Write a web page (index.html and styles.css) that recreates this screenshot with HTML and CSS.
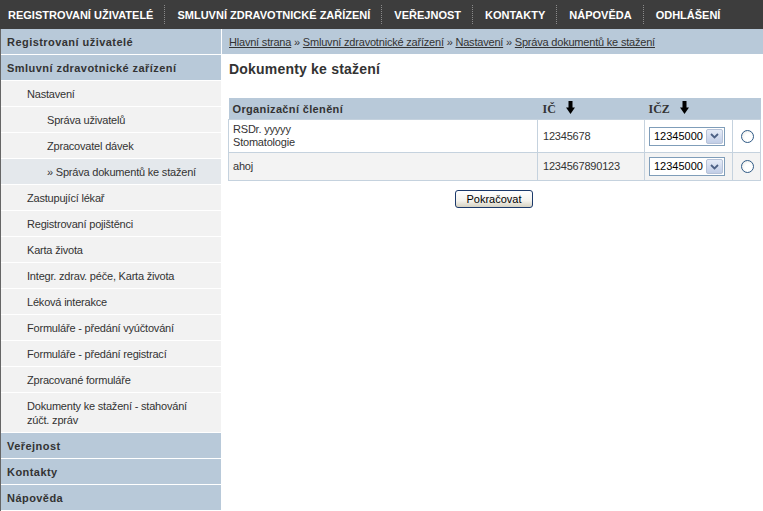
FILE: index.html
```html
<!DOCTYPE html>
<html lang="cs">
<head>
<meta charset="utf-8">
<title>Dokumenty ke stažení</title>
<link rel="stylesheet" href="styles.css">
</head>
<body>
<div class="page">
  <nav class="topnav">
    <a class="tn-item">REGISTROVANÍ UŽIVATELÉ</a><span class="tn-sep"></span>
    <a class="tn-item">SMLUVNÍ ZDRAVOTNICKÉ ZAŘÍZENÍ</a><span class="tn-sep"></span>
    <a class="tn-item">VEŘEJNOST</a><span class="tn-sep"></span>
    <a class="tn-item">KONTAKTY</a><span class="tn-sep"></span>
    <a class="tn-item">NÁPOVĚDA</a><span class="tn-sep"></span>
    <a class="tn-item">ODHLÁŠENÍ</a>
  </nav>
  <div class="main">
    <aside class="sidebar">
      <div class="sb-head">Registrovaní uživatelé</div>
      <div class="sb-head">Smluvní zdravotnické zařízení</div>
      <div class="sb-item">Nastavení</div>
      <div class="sb-sub">Správa uživatelů</div>
      <div class="sb-sub">Zpracovatel dávek</div>
      <div class="sb-sub active">» Správa dokumentů ke stažení</div>
      <div class="sb-item">Zastupující lékař</div>
      <div class="sb-item">Registrovaní pojištěnci</div>
      <div class="sb-item">Karta života</div>
      <div class="sb-item">Integr. zdrav. péče, Karta života</div>
      <div class="sb-item">Léková interakce</div>
      <div class="sb-item">Formuláře - předání vyúčtování</div>
      <div class="sb-item">Formuláře - předání registrací</div>
      <div class="sb-item">Zpracované formuláře</div>
      <div class="sb-item">Dokumenty ke stažení - stahování<br>zúčt. zpráv</div>
      <div class="sb-head">Veřejnost</div>
      <div class="sb-head">Kontakty</div>
      <div class="sb-head last">Nápověda</div>
    </aside>
    <section class="content">
      <div class="breadcrumb">
        <a>Hlavní strana</a> » <a>Smluvní zdravotnické zařízení</a> » <a>Nastavení</a> » <a>Správa dokumentů ke stažení</a>
      </div>
      <h1 class="title">Dokumenty ke stažení</h1>
      <table class="grid">
        <thead>
          <tr>
            <th class="c1">Organizační členění</th>
            <th class="c2"><span class="serif">IČ</span><svg class="arrow" width="9" height="14" viewBox="0 0 9 14"><rect x="2.5" y="0" width="4" height="7" fill="#000"/><polygon points="0,6.5 9,6.5 4.5,13" fill="#000"/></svg></th>
            <th class="c3"><span class="serif">IČZ</span><svg class="arrow" width="9" height="14" viewBox="0 0 9 14"><rect x="2.5" y="0" width="4" height="7" fill="#000"/><polygon points="0,6.5 9,6.5 4.5,13" fill="#000"/></svg></th>
            <th class="c4"></th>
          </tr>
        </thead>
        <tbody>
          <tr class="odd">
            <td>RSDr. yyyyy<br>Stomatologie</td>
            <td>12345678</td>
            <td><div class="combo"><span class="combo-val">12345000</span><span class="combo-btn"><svg width="9" height="6" viewBox="0 0 9 6"><polyline points="1,1 4.5,4.5 8,1" fill="none" stroke="#4d6185" stroke-width="1.8"/></svg></span></div></td>
            <td class="rad"><span class="radio"></span></td>
          </tr>
          <tr class="even">
            <td>ahoj</td>
            <td>1234567890123</td>
            <td><div class="combo"><span class="combo-val">12345000</span><span class="combo-btn"><svg width="9" height="6" viewBox="0 0 9 6"><polyline points="1,1 4.5,4.5 8,1" fill="none" stroke="#4d6185" stroke-width="1.8"/></svg></span></div></td>
            <td class="rad"><span class="radio"></span></td>
          </tr>
        </tbody>
      </table>
      <div class="actions"><button class="btn">Pokračovat</button></div>
    </section>
  </div>
</div>
</body>
</html>
```

FILE: styles.css
```css
* { box-sizing: border-box; }
html, body { margin: 0; padding: 0; background: #fff; }
body {
  font-family: "Liberation Sans", Arial, sans-serif;
  font-size: 11px;
  letter-spacing: -0.2px;
  color: #333;
}
.page { width: 763px; height: 511px; overflow: hidden; display: flex; flex-direction: column; }

.topnav {
  height: 29px;
  background: #3d3d3d;
  display: flex;
  align-items: center;
  padding-left: 8px;
}
.tn-item {
  color: #fff;
  font-weight: bold;
  font-size: 11px;
  letter-spacing: 0;
  white-space: nowrap;
}
.tn-sep {
  width: 0;
  height: 19px;
  border-left: 1px dotted #8a8a8a;
  margin: 0 12px 0 11px;
}

.main { flex: 1; display: flex; border-left: 1px solid #666; gap: 1px; }

.sidebar { width: 220px; flex: none; display: flex; flex-direction: column; }
.sb-head, .sb-item, .sb-sub {
  border-bottom: 1px solid #fff;
  padding: 6px 4px 5px 6px;
  line-height: 14px;
  min-height: 26px;
}
.sb-head { background: #b8c9d9; font-weight: bold; color: #333; letter-spacing: 0.45px; }
.sb-head.last { flex: 1; }
.sb-item { background: #f2f2f2; padding-left: 26px; }
.sb-sub { background: #f2f2f2; padding-left: 46px; }
.sb-sub.active { background: #e4e8ec; }

.content { flex: 1; display: flex; flex-direction: column; }
.breadcrumb {
  background: #b8c9d9;
  height: 25px;
  padding: 6px 0 0 7px;
  line-height: 14px;
  color: #333;
}
.breadcrumb a { color: #333; text-decoration: underline; }
.title {
  margin: 6px 0 0 7px;
  font-size: 14px;
  line-height: 18px;
  font-weight: bold;
  letter-spacing: 0.2px;
  color: #333;
}

.grid {
  margin: 20px 2px 0 6px;
  border-collapse: collapse;
  width: 533px;
}
.grid th {
  background: #b8c9d9;
  text-align: left;
  font-weight: bold;
  letter-spacing: 0.35px;
  padding: 3px 4px 3px 4px;
  height: 20px;
  line-height: 14px;
  white-space: nowrap;
}
.grid th.c1 { width: 309px; }
.grid th.c2 { width: 107px; padding-left: 5px; }
.grid th.c3 { width: 88px; padding-left: 4px; }
.serif { font-family: "Liberation Serif", "Times New Roman", serif; font-size: 12px; font-weight: bold; letter-spacing: 0; }
.arrow { display: inline-block; vertical-align: -2px; margin-left: 10px; }
.grid td {
  border: 1px solid #c5d2de;
  padding: 3px 4px;
  line-height: 13px;
  vertical-align: middle;
}
.grid tr.odd td { background: #fff; }
.grid tr.even { height: 28px; }
.grid tr.even td { background: #f3f3f3; }
.grid td:nth-child(2) { padding-left: 5px; }
.grid td.rad { text-align: center; padding: 3px 0 0 1px; }

.combo {
  display: flex;
  width: 76px;
  height: 19px;
  border: 1px solid #7f9db9;
  background: #fff;
  align-items: center;
  padding: 1px;
}
.combo-val { flex: 1; font-size: 11px; letter-spacing: 0; color: #000; padding-left: 3px; }
.combo-btn {
  width: 17px;
  height: 15px;
  border: 1px solid #b6c2d8;
  border-radius: 2px;
  background: linear-gradient(#e6ecf8, #c1cde6);
  display: flex;
  align-items: center;
  justify-content: center;
}
.radio {
  display: inline-block;
  width: 13px;
  height: 13px;
  border: 1px solid #2f5a86;
  border-radius: 50%;
  background: radial-gradient(circle at 60% 60%, #fff 40%, #e0e0dc 100%);
}

.actions { display: flex; justify-content: center; margin-top: 9px; padding-left: 3px; }
.btn {
  font-family: "Liberation Sans", Arial, sans-serif;
  font-size: 11px;
  letter-spacing: 0;
  color: #000;
  width: 78px;
  height: 18px;
  padding: 0;
  border: 1px solid #1c3a6b;
  border-radius: 3px;
  background: linear-gradient(#fff 0%, #f4f3ee 60%, #d6d2c2 100%);
}
```
